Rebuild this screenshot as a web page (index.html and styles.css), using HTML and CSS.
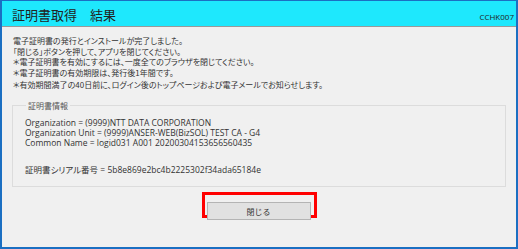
FILE: index.html
```html
<!DOCTYPE html>
<html>
<head>
  <meta charset="utf-8">
  <title>証明書取得 結果</title>
  <link rel="stylesheet" href="styles.css">
</head>
<body>
  <div class="window">
    <div class="titlebar">
      <h1>証明書取得　結果</h1>
      <span class="screen-id">CCHK007</span>
    </div>

    <div class="content">
      <div class="message">
        <p>電子証明書の発行とインストールが完了しました。</p>
        <p>「閉じる」ボタンを押して、アプリを閉じてください。</p>
        <p>＊電子証明書を有効にするには、一度全てのブラウザを閉じてください。</p>
        <p>＊電子証明書の有効期限は、発行後1年間です。</p>
        <p class="last">＊有効期間満了の40日前に、ログイン後のトップページおよび電子メールでお知らせします。</p>
      </div>

      <fieldset class="cert">
        <legend>証明書情報</legend>
        <p>Organization = (9999)NTT DATA CORPORATION</p>
        <p>Organization Unit = (9999)ANSER-WEB(BizSOL) TEST CA - G4</p>
        <p>Common Name = logid031 A001 20200304153656560435</p>
        <p class="serial">証明書シリアル番号 = 5b8e869e2bc4b2225302f34ada65184e</p>
      </fieldset>

      <div class="actions">
        <div class="focus">
          <button class="close">閉じる</button>
        </div>
      </div>
    </div>
  </div>
</body>
</html>
```

FILE: styles.css
```css
body {
  margin: 0;
  padding: 0;
  font-family: "Noto Sans CJK JP", "Open Sans", sans-serif;
  font-feature-settings: "palt";
  color: #333;
}

.window {
  width: 518px;
  height: 249px;
  box-sizing: border-box;
  border: 2px solid #1b6fc2;
  border-top-width: 1px;
  background-color: #f0f0f0;
  display: flex;
  flex-direction: column;
}

.titlebar {
  height: 25px;
  background-color: #1ee8fd;
  border-bottom: 1px solid #9a9a9a;
  display: flex;
  justify-content: space-between;
  align-items: flex-end;
  padding: 0 2px 0 10px;
}

.titlebar h1 {
  margin: 0 0 3px 0;
  font-size: 13px;
  font-weight: normal;
  color: #222;
  line-height: 16px;
}

.screen-id {
  font-family: "Open Sans", sans-serif;
  font-size: 8px;
  color: #222;
  margin-bottom: 4px;
}

.content {
  flex: 1;
  padding: 9px 11px 0 11px;
}

.message p {
  margin: 0;
  font-size: 8px;
  line-height: 10.6px;
  white-space: nowrap;
}

.message p.last {
  margin-top: 2px;
}

.cert {
  margin: 10px 0 0 -1px;
  width: 494px;
  box-sizing: border-box;
  height: 86px;
  border: 1px solid #dcdcdc;
  padding: 7px 12px 0 12px;
}

.cert legend {
  font-size: 8px;
  color: #555;
  padding: 0 2px;
  margin-left: 1px;
  line-height: 10px;
}

.cert p {
  margin: 0;
  font-family: "Open Sans", "Noto Sans CJK JP", sans-serif;
  font-size: 8.5px;
  line-height: 10px;
  white-space: nowrap;
}

.cert p.serial {
  margin-top: 17px;
}

.actions {
  display: flex;
  justify-content: center;
  margin-top: 5px;
}

.focus {
  border: 3px solid #f00;
  padding: 1px;
  width: 107px;
  height: 18px;
}

.close {
  width: 104px;
  height: 18px;
  margin-left: 1px;
  background-color: #e1e1e1;
  border: 1px solid #b4b4b4;
  font-family: "Noto Sans CJK JP", sans-serif;
  font-size: 8px;
  color: #333;
  padding: 0;
}
```
